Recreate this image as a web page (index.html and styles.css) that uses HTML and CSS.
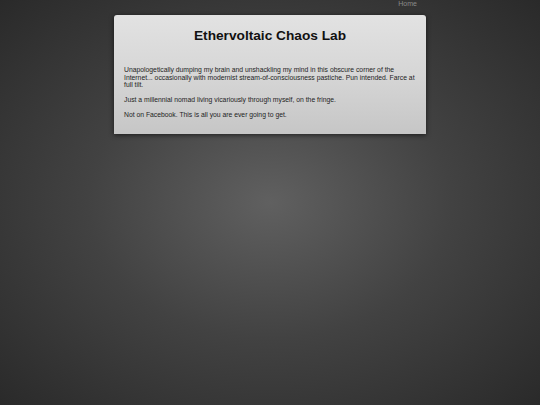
FILE: index.html
```html
<!DOCTYPE html>
<html>
<head>
<meta charset="utf-8">
<link rel="stylesheet" href="styles.css">
</head>
<body>
<nav class="topnav"><a class="navlink" href="#">Home</a></nav>
<main class="card">
  <h1 class="title">Ethervoltaic Chaos Lab</h1>
  <p class="para">Unapologetically dumping my brain and unshackling my mind in this obscure corner of the Internet... occasionally with modernist stream-of-consciousness pastiche. Pun intended. Farce at full tilt.</p>
  <p class="para">Just a millennial nomad living vicariously through myself, on the fringe.</p>
  <p class="para">Not on Facebook. This is all you are ever going to get.</p>
</main>
</body>
</html>
```
FILE: styles.css
```css
html, body {
  margin: 0;
  padding: 0;
  height: 100%;
}
body {
  background: radial-gradient(ellipse 75% 75% at 50% 50%, #606060 0%, #424242 45%, #272727 100%);
  background-color: #262626;
  font-family: "Liberation Sans", Arial, sans-serif;
  overflow: hidden;
}
.topnav {
  width: 312px;
  margin: 0 auto;
  height: 15px;
  display: flex;
  justify-content: flex-end;
  align-items: flex-start;
}
.navlink {
  color: #8a8a8a;
  font-size: 7px;
  text-decoration: none;
  margin-right: 9px;
  line-height: 8px;
}
.card {
  width: 312px;
  box-sizing: border-box;
  margin: 0 auto;
  padding: 12px 10px 15px 10px;
  background: linear-gradient(to bottom, #e2e2e2 0%, #d6d6d6 50%, #c6c6c6 100%);
  border-radius: 3px 3px 0 0;
  box-shadow: 0 1px 5px rgba(0,0,0,0.6);
  color: #1e1e1e;
}
.title {
  margin: 0 0 21px 0;
  font-size: 13.7px;
  line-height: 18px;
  font-weight: bold;
  text-align: center;
  color: #111;
}
.para {
  margin: 0 0 7.5px 0;
  font-size: 6.8px;
  line-height: 7.5px;
}
.para:last-child {
  margin-bottom: 0;
}
```
